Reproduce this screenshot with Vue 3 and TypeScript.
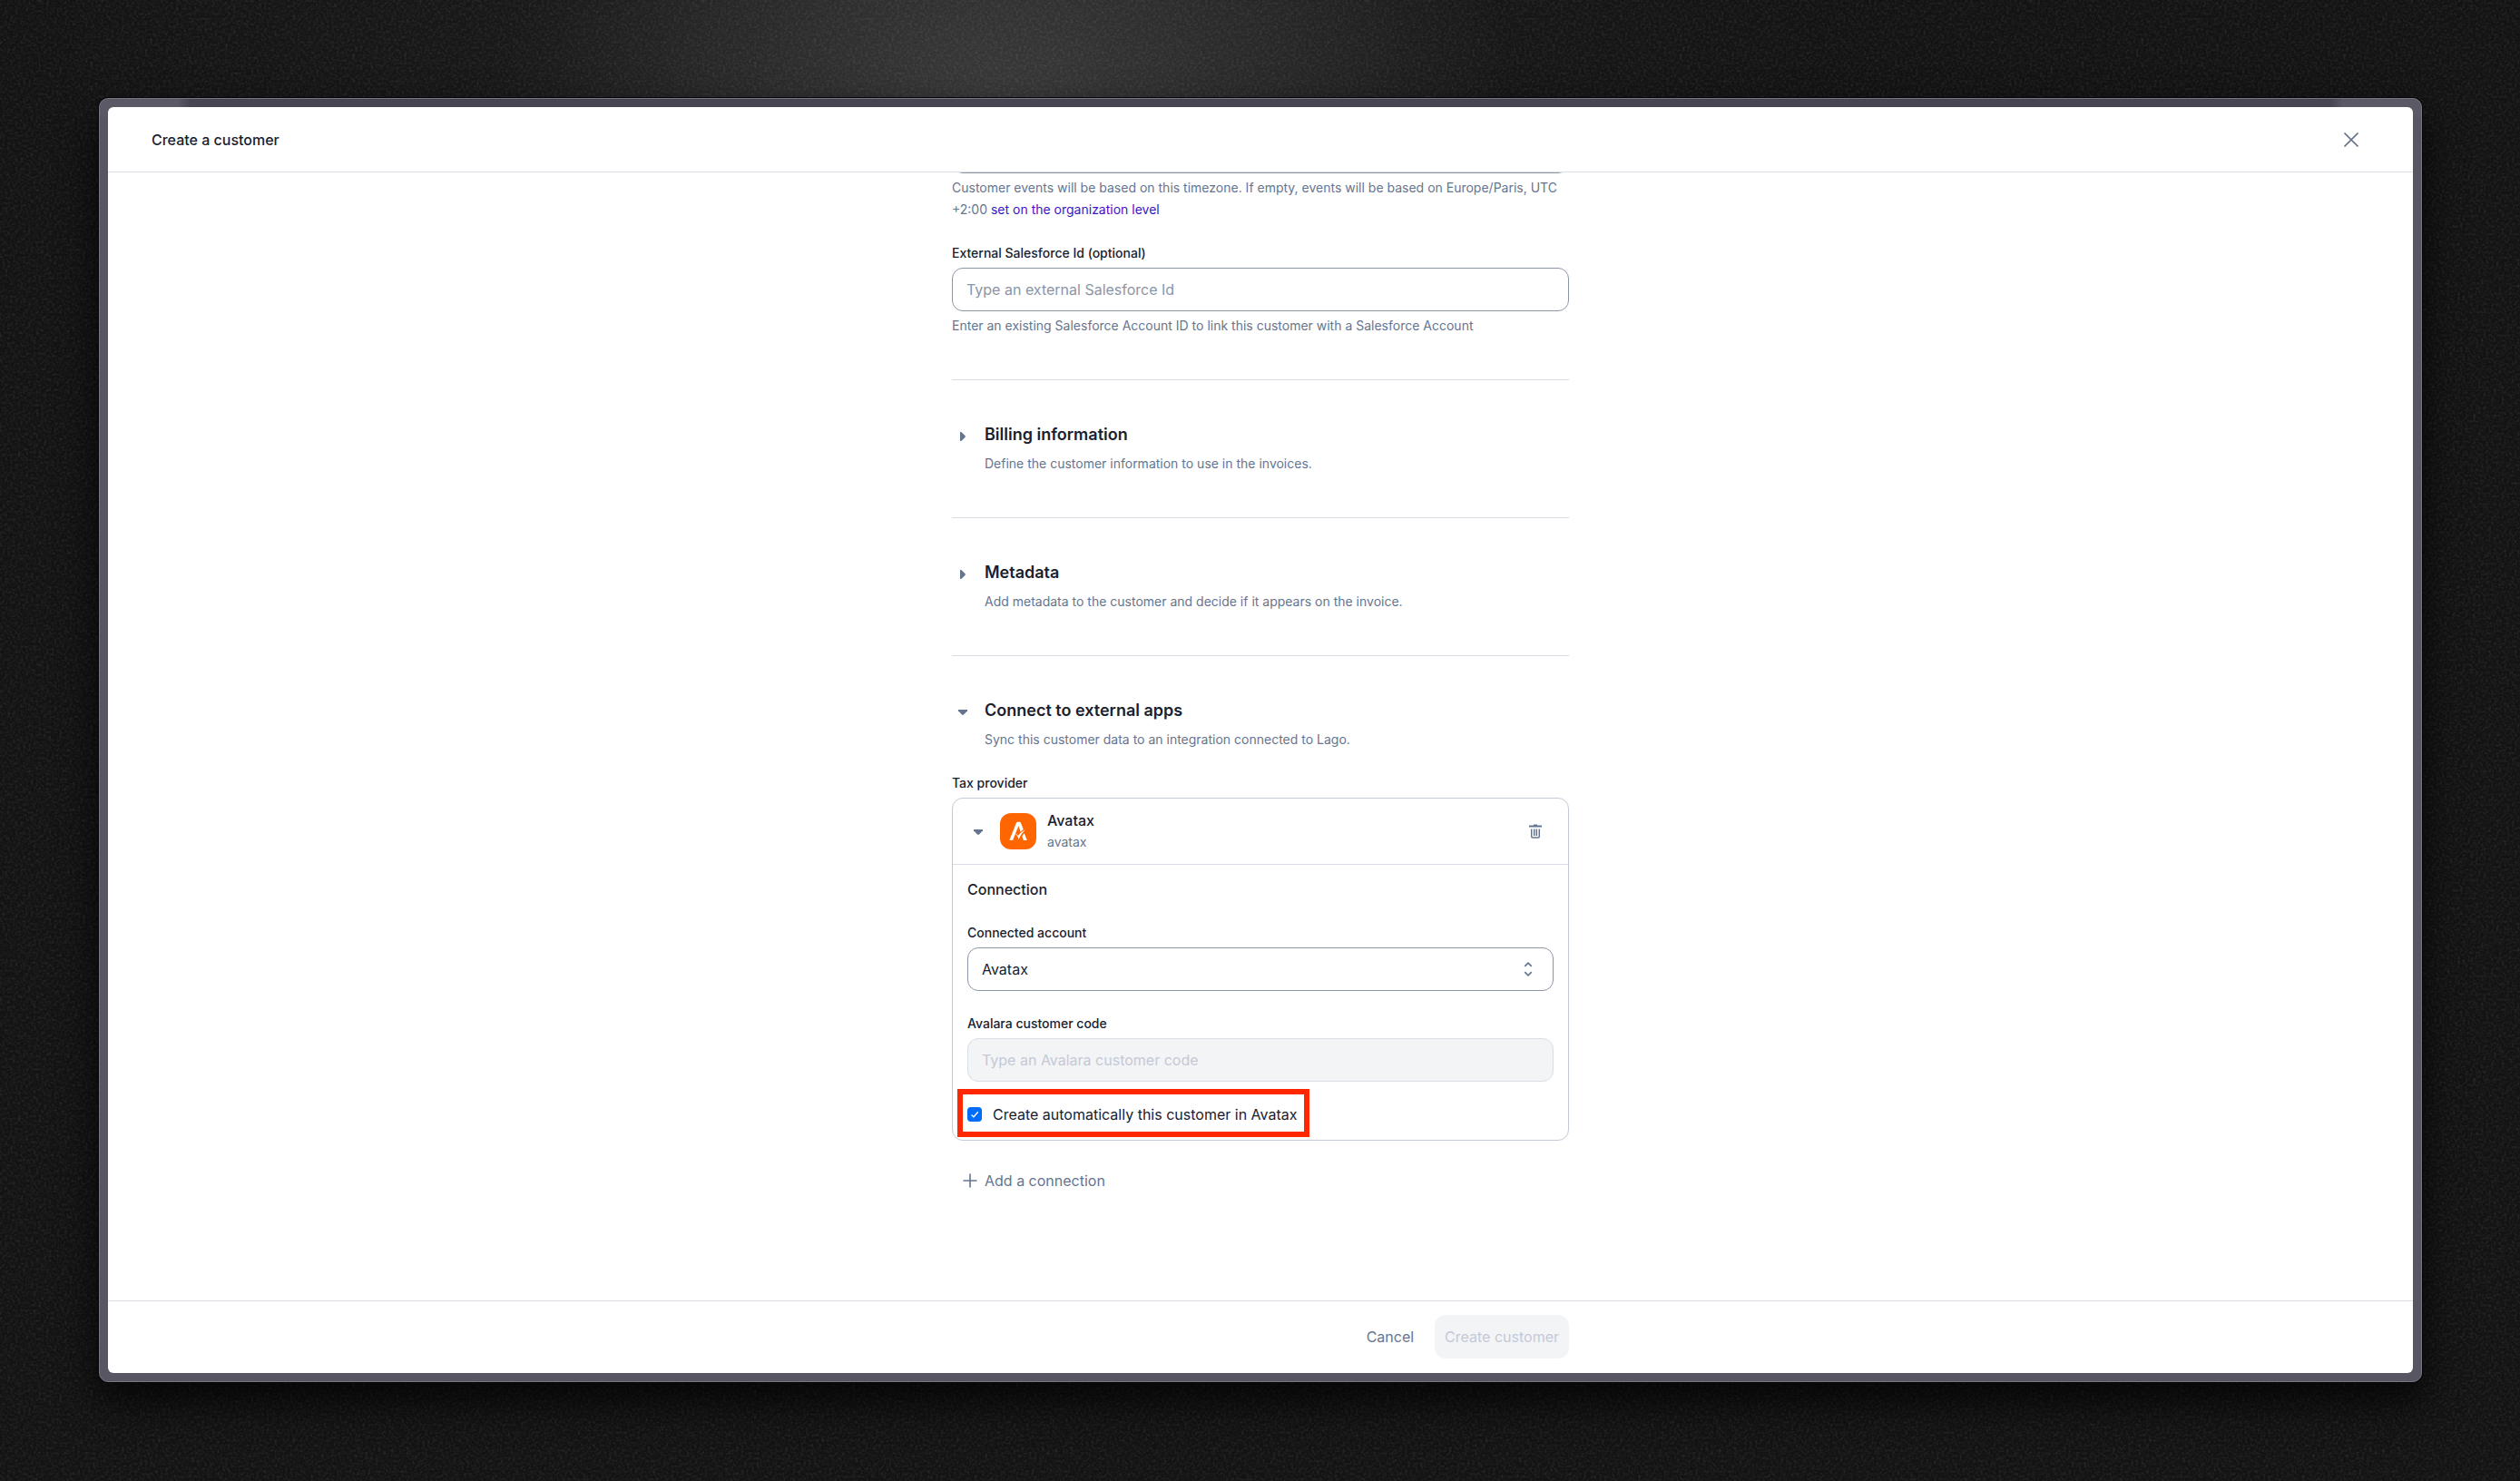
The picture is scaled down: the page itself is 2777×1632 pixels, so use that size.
<script setup lang="ts">
import { ref } from 'vue'

interface Section {
  title: string
  description: string
}

const collapsedSections: Section[] = [
  { title: 'Billing information', description: 'Define the customer information to use in the invoices.' },
  { title: 'Metadata', description: 'Add metadata to the customer and decide if it appears on the invoice.' },
]

const timezone = ref('')
const salesforceId = ref('')
const account = ref('Avatax')
const customerCode = ref('')
const syncWithProvider = ref(true)
</script>

<template>
  <div class="desktop">
    <svg class="grain" aria-hidden="true">
      <filter id="grain" x="0" y="0" width="100%" height="100%">
        <feTurbulence type="fractalNoise" baseFrequency="0.35" numOctaves="3" seed="4" stitchTiles="stitch" />
        <feColorMatrix type="matrix" values="0 0 0 0 1  0 0 0 0 1  0 0 0 0 1  0.5 0.5 0 0 -0.43" />
      </filter>
      <rect width="100%" height="100%" filter="url(#grain)" />
    </svg>

    <div class="frame">
      <div class="window">
        <header class="header">
          <h1>Create a customer</h1>
          <button class="icon-button" type="button" aria-label="Close">
            <svg width="16" height="16" viewBox="0 0 16 16" fill="none" stroke="currentColor" stroke-width="1.6">
              <path d="M0.5 0.5 15.5 15.5M15.5 0.5 0.5 15.5" />
            </svg>
          </button>
        </header>

        <main class="content">
          <form class="column" @submit.prevent>
            <section class="section first">
              <div class="field scrolled">
                <input v-model="timezone" class="control" type="text" aria-label="Timezone" />
                <p class="hint">
                  Customer events will be based on this timezone. If empty, events will be based on Europe/Paris, UTC
                  <span>+2:00 </span><a href="#organization">set on the organization level</a>
                </p>
              </div>
              <div class="field">
                <label for="salesforce">External Salesforce Id (optional)</label>
                <input
                  id="salesforce"
                  v-model="salesforceId"
                  class="control"
                  type="text"
                  placeholder="Type an external Salesforce Id"
                />
                <p class="hint">Enter an existing Salesforce Account ID to link this customer with a Salesforce Account</p>
              </div>
            </section>

            <section v-for="section in collapsedSections" :key="section.title" class="section">
              <div class="summary">
                <button class="toggle" type="button" :aria-label="section.title">
                  <svg width="16" height="16" viewBox="0 0 16 16" fill="currentColor">
                    <path d="M5 3h1.300l3.900 3.700c.8.800.8 1.800 0 2.600L6.300 13H5z" />
                  </svg>
                </button>
                <div class="summary-text">
                  <h2>{{ section.title }}</h2>
                  <p>{{ section.description }}</p>
                </div>
              </div>
            </section>

            <section class="section last">
              <div class="summary">
                <button class="toggle" type="button" aria-label="Connect to external apps">
                  <svg width="16" height="16" viewBox="0 0 16 16" fill="currentColor">
                    <path d="M3 5h10v1.300l-3.700 3.900c-.8.800-1.800.8-2.600 0L3 6.300z" />
                  </svg>
                </button>
                <div class="summary-text">
                  <h2>Connect to external apps</h2>
                  <p>Sync this customer data to an integration connected to Lago.</p>
                </div>
              </div>

              <div class="provider">
                <h3>Tax provider</h3>
                <div class="card">
                  <div class="card-header">
                    <button class="toggle" type="button" aria-label="Toggle Avatax">
                      <svg width="16" height="16" viewBox="0 0 16 16" fill="currentColor">
                        <path d="M3 6h10v1.300l-3.700 3.900c-.8.800-1.800.8-2.600 0L3 7.300z" />
                      </svg>
                    </button>
                    <svg class="logo" width="40" height="40" viewBox="0 0 40 40" aria-hidden="true">
                      <rect width="40" height="40" rx="12" fill="#ff6600" />
                      <path
                        fill="#fff"
                        d="M10.300 30 17.800 11c.4-.9 1-1.300 1.800-1.300h1.700c.8 0 1.400.4 1.700 1.300l2.700 6.800-3 2.900L20.400 14.200 14 30z"
                      />
                      <path fill="#fff" d="M16.600 22.300c1.500.6 2.600 1.500 3.400 2.800 1.800-2.900 4.400-5.200 8-6.900-3.400 3.100-5.700 6.500-7.400 10.800-.7-2.700-2-4.900-4-6.700z" />
                      <path fill="#fff" d="M26.700 22.200 29.800 30h-3.900l-1.500-4.400z" />
                    </svg>
                    <div class="card-title">
                      <strong>Avatax</strong>
                      <span>avatax</span>
                    </div>
                    <button class="icon-button" type="button" aria-label="Delete connection">
                      <svg width="16" height="16" viewBox="0 0 16 16" fill="currentColor">
                        <path d="M6 1.500V0.500h4v1h5v2H1v-2z" />
                        <path
                          fill="none"
                          stroke="currentColor"
                          stroke-width="1.500"
                          d="M3.700 5.500v8.300c0 .8.500 1.300 1.300 1.300h6c.8 0 1.300-.5 1.300-1.300V5.500M6.700 5.500v7.500M9.300 5.500v7.500"
                        />
                      </svg>
                    </button>
                  </div>

                  <div class="card-body">
                    <h4>Connection</h4>
                    <div class="field">
                      <label for="account">Connected account</label>
                      <div class="select">
                        <select id="account" v-model="account" class="control">
                          <option>Avatax</option>
                        </select>
                        <svg width="16" height="16" viewBox="0 0 16 16" fill="none" stroke="currentColor" stroke-width="1.700">
                          <path d="M4.300 4.800 8 1.200l3.700 3.600M4.300 11.200 8 14.800l3.700-3.600" />
                        </svg>
                      </div>
                    </div>
                    <div class="field">
                      <label for="code">Avalara customer code</label>
                      <input
                        id="code"
                        v-model="customerCode"
                        class="control"
                        type="text"
                        placeholder="Type an Avalara customer code"
                        disabled
                      />
                    </div>
                    <label class="check">
                      <input v-model="syncWithProvider" type="checkbox" />
                      <span>Create automatically this customer in Avatax</span>
                    </label>
                  </div>
                </div>
              </div>

              <button class="add" type="button">
                <svg width="16" height="16" viewBox="0 0 16 16" fill="none" stroke="currentColor" stroke-width="1.600">
                  <path d="M8 0.500v15M0.500 8h15" />
                </svg>
                Add a connection
              </button>
            </section>
          </form>
        </main>

        <footer class="footer">
          <div class="column actions">
            <button class="button" type="button">Cancel</button>
            <button class="button" type="submit" disabled>Create customer</button>
          </div>
        </footer>
      </div>
    </div>
  </div>
</template>

<style>
body {
  margin: 0;
  background: #151515;
}
</style>

<style scoped>
* {
  box-sizing: border-box;
}

.desktop {
  position: relative;
  display: flex;
  height: 100vh;
  padding: 108px 108px 109px 109px;
  background:
    radial-gradient(ellipse 560px 480px at 40% 7%, rgba(255, 255, 255, 0.13), rgba(255, 255, 255, 0.06) 60%, transparent),
    radial-gradient(ellipse 1000px 600px at 37% 4%, rgba(255, 255, 255, 0.04), transparent),
    #131313;
  color: #19212e;
  font: 16px/24px Inter, sans-serif;
}

.grain {
  position: absolute;
  inset: 0;
  width: 100%;
  height: 100%;
  opacity: 0.25;
}

.frame {
  position: relative;
  flex: 1;
  display: flex;
  min-width: 0;
  padding: 9px;
  border: 1px solid #777683;
  border-radius: 10px;
  background: linear-gradient(90deg, #5b5966 86px, #474552 100px calc(100% - 100px), #5b5966 calc(100% - 86px)) top / 100% 20px
    no-repeat #585663;
  box-shadow: 0 0 0 1px #060606, 0 20px 40px 4px rgba(0, 0, 0, 0.7);
}

.window {
  flex: 1;
  display: flex;
  flex-direction: column;
  min-width: 0;
  overflow: hidden;
  border-radius: 6px;
  background: #fff;
}

h1,
h2,
h3,
h4,
p {
  margin: 0;
}

h1,
h4 {
  font-size: 16px;
  font-weight: 500;
}

h2 {
  font-size: 18px;
  font-weight: 600;
}

h3,
label {
  font-size: 14px;
  font-weight: 500;
}

button {
  border: 0;
  background: none;
  color: #66758f;
  font: inherit;
}

svg {
  display: block;
}

.header {
  display: flex;
  align-items: center;
  justify-content: space-between;
  height: 72px;
  padding: 0 48px;
  border-bottom: 1px solid #d9dee7;
}

.icon-button {
  display: grid;
  place-items: center;
  width: 40px;
  height: 40px;
  padding: 0;
}

.content {
  flex: 1;
  min-height: 0;
  overflow: hidden;
}

.column {
  width: 100%;
  max-width: 680px;
  margin: 0 auto;
}

.section {
  padding: 48px 0;
  box-shadow: inset 0 -1px #d9dee7;
}

.section.first {
  display: flex;
  flex-direction: column;
  gap: 24px;
  padding-top: 0;
}

.section.last {
  display: flex;
  flex-direction: column;
  gap: 24px;
  box-shadow: none;
}

.field {
  display: flex;
  flex-direction: column;
  gap: 4px;
}

.scrolled {
  margin-top: -47px;
}

.control {
  width: 100%;
  height: 48px;
  padding: 0 15px;
  border: 1px solid #8c95a6;
  border-radius: 12px;
  background: #fff;
  color: #19212e;
  font: inherit;
  appearance: none;
}

.control::placeholder {
  color: #8c95a6;
  opacity: 1;
}

.control:disabled {
  border-color: #d9dee7;
  background: #f3f4f6;
}

.control:disabled::placeholder {
  color: #c3c9d6;
}

.select {
  position: relative;
}

.select svg {
  position: absolute;
  top: 16px;
  right: 20px;
  color: #66758f;
  pointer-events: none;
}

.hint {
  color: #66758f;
  font-size: 14px;
}

.hint a {
  color: #3c14c8;
  text-decoration: none;
}

.summary {
  display: flex;
  gap: 12px;
}

.toggle {
  display: grid;
  place-items: center;
  width: 24px;
  height: 28px;
  padding: 0;
}

.summary-text {
  display: flex;
  flex-direction: column;
  gap: 8px;
}

.summary-text p {
  color: #66758f;
  font-size: 14px;
}

.provider {
  display: flex;
  flex-direction: column;
  gap: 4px;
}

.card {
  border: 1px solid #c3c9d6;
  border-radius: 12px;
}

.card-header {
  display: flex;
  align-items: center;
  gap: 12px;
  padding: 12px 16px;
}

.card-title {
  display: flex;
  flex: 1;
  flex-direction: column;
}

.card-title strong {
  font-weight: 500;
}

.card-title span {
  color: #66758f;
  font-size: 14px;
}

.card-body {
  display: flex;
  flex-direction: column;
  align-items: stretch;
  gap: 24px;
  padding: 16px;
  box-shadow: inset 0 1px #d9dee7;
}

.check {
  position: relative;
  display: flex;
  align-items: center;
  align-self: flex-start;
  gap: 12px;
  font-size: 16px;
  font-weight: 400;
}

.check::after {
  content: '';
  position: absolute;
  inset: -16px -14px -13px -11px;
  border: 6px solid #ff2600;
}

.check input {
  width: 16px;
  height: 16px;
  margin: 0;
  border-radius: 4px;
  background: #006cfa;
  appearance: none;
}

.check input:checked {
  background: #006cfa
    url("data:image/svg+xml,%3Csvg xmlns='http://www.w3.org/2000/svg' viewBox='0 0 16 16'%3E%3Cpath d='M4.500 8.500 7 10.800 11.800 5.300' fill='none' stroke='%23fff' stroke-width='1.300'/%3E%3C/svg%3E");
}

.add {
  display: flex;
  align-items: center;
  align-self: flex-start;
  gap: 8px;
  height: 40px;
  padding: 0 12px;
}

.footer {
  padding: 16px;
  box-shadow: inset 0 1px #d9dee7;
}

.actions {
  display: flex;
  justify-content: flex-end;
  gap: 12px;
}

.button {
  height: 48px;
  padding: 0 11px;
  border-radius: 12px;
}

.button:disabled {
  background: #f3f4f6;
  color: #c3c9d6;
}
</style>
